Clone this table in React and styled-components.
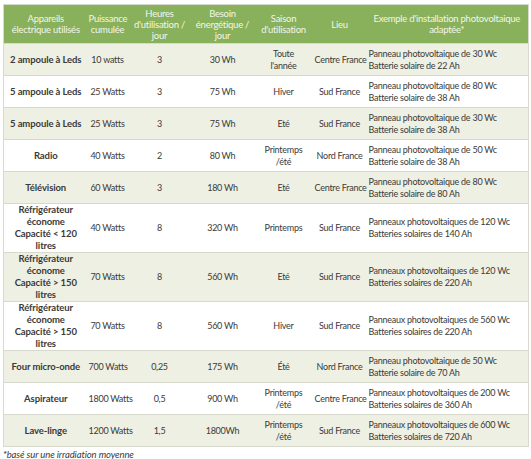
import React from 'react';
import styled, { createGlobalStyle } from 'styled-components';

const GlobalStyle = createGlobalStyle`
  html, body {
    margin: 0;
    padding: 0;
    background: #ffffff;
  }
  body {
    font-family: Lato, "Open Sans", sans-serif;
    color: #3a3a3a;
  }
`;

const Page = styled.div`
  width: 531px;
  height: 459px;
  padding: 4px 3px 0 3px;
  box-sizing: border-box;
`;

const Table = styled.table`
  width: 525px;
  border-collapse: collapse;
  table-layout: fixed;
  border: 1px solid #d6d9cb;
  font-size: 9px;
  letter-spacing: -0.25px;
`;

const HeadCell = styled.th`
  background: #89b05b;
  color: #f2f6ea;
  font-weight: normal;
  font-size: 9.5px;
  text-align: center;
  vertical-align: middle;
  line-height: 11px;
  height: 38px;
  padding: 0 1px;
  white-space: nowrap;
`;

const Row = styled.tr`
  background: ${(p) => (p.$shaded ? '#eef0e3' : '#ffffff')};
  border-top: 1px solid #d6d9cb;
  height: ${(p) => (p.$tall ? '48px' : '32px')};
`;

const Cell = styled.td`
  text-align: ${(p) => (p.$left ? 'left' : 'center')};
  vertical-align: middle;
  line-height: 12px;
  padding: 0 ${(p) => (p.$left ? '3px' : '1px')};
  white-space: nowrap;
`;

const NameCell = styled.td`
  text-align: center;
  vertical-align: middle;
  font-weight: bold;
  font-size: 9.5px;
  letter-spacing: -0.1px;
  line-height: 12px;
  padding: 0 1px;
  white-space: nowrap;
`;

const Note = styled.div`
  font-style: italic;
  font-size: 9.5px;
  line-height: 11px;
  letter-spacing: -0.1px;
  color: #3a3a3a;
  margin-top: 2px;
`;

const widths = [84, 40, 64, 62, 60, 52, 163];

const lines = (...parts) =>
  parts.map((p, i) => (
    <React.Fragment key={i}>
      {i > 0 && <br />}
      {p}
    </React.Fragment>
  ));

const headers = [
  lines('Appareils', 'électrique utilisés'),
  lines('Puissance', 'cumulée'),
  lines('Heures', "d'utilisation /", 'jour'),
  lines('Besoin', 'énergétique /', 'jour'),
  lines('Saison', "d'utilisation"),
  lines('Lieu'),
  lines("Exemple d'installation photovoltaique", 'adaptée*'),
];

const frigo = (sign, n) => lines('Réfrigérateur', 'économe', `Capacité ${sign} ${n}`, 'litres');

const printemps = lines('Printemps', '/été');

const rows = [
  ['2 ampoule à Leds', '10 watts', '3', '30 Wh', lines('Toute', "l'année"), 'Centre France', 'Panneau photovoltaique de 30 Wc', 'Batterie solaire de 22 Ah'],
  ['5 ampoule à Leds', '25 Watts', '3', '75 Wh', 'Hiver', 'Sud France', 'Panneau photovoltaique de 80 Wc', 'Batterie solaire de 38 Ah'],
  ['5 ampoule à Leds', '25 Watts', '3', '75 Wh', 'Eté', 'Sud France', 'Panneau photovoltaique de 30 Wc', 'Batterie solaire de 38 Ah'],
  ['Radio', '40 Watts', '2', '80 Wh', printemps, 'Nord France', 'Panneau photovoltaique de 50 Wc', 'Batterie solaire de 38 Ah'],
  ['Télévision', '60 Watts', '3', '180 Wh', 'Eté', 'Centre France', 'Panneau photovoltaique de 80 Wc', 'Batterie solaire de 80 Ah'],
  [frigo('<', 120), '40 Watts', '8', '320 Wh', 'Printemps', 'Sud France', 'Panneaux photovoltaiques de 120 Wc', 'Batteries solaires de 140 Ah', true],
  [frigo('>', 150), '70 Watts', '8', '560 Wh', 'Eté', 'Sud France', 'Panneaux photovoltaiques de 120 Wc', 'Batteries solaires de 220 Ah', true],
  [frigo('>', 150), '70 Watts', '8', '560 Wh', 'Hiver', 'Sud France', 'Panneaux photovoltaiques de 560 Wc', 'Batteries solaires de 220 Ah', true],
  ['Four micro-onde', '700 Watts', '0,25', '175 Wh', 'Été', 'Nord France', 'Panneau photovoltaique de 50 Wc', 'Batterie solaire de 70 Ah'],
  ['Aspirateur', '1800 Watts', '0,5', '900 Wh', printemps, 'Centre France', 'Panneaux photovoltaiques de 200 Wc', 'Batteries solaires de 360 Ah'],
  ['Lave-linge', '1200 Watts', '1,5', '1800Wh', printemps, 'Sud France', 'Panneaux photovoltaiques de 600 Wc', 'Batteries solaires de 720 Ah'],
];

const App = () => (
  <Page>
    <GlobalStyle />
    <Table>
      <colgroup>
        {widths.map((w, i) => (
          <col key={i} style={{ width: w }} />
        ))}
      </colgroup>
      <thead>
        <tr>
          {headers.map((h, i) => (
            <HeadCell key={i}>{h}</HeadCell>
          ))}
        </tr>
      </thead>
      <tbody>
        {rows.map((r, i) => (
          <Row key={i} $shaded={i % 2 === 0} $tall={r[8]}>
            <NameCell>{r[0]}</NameCell>
            <Cell>{r[1]}</Cell>
            <Cell>{r[2]}</Cell>
            <Cell>{r[3]}</Cell>
            <Cell>{r[4]}</Cell>
            <Cell>{r[5]}</Cell>
            <Cell $left>{lines(r[6], r[7])}</Cell>
          </Row>
        ))}
      </tbody>
    </Table>
    <Note>*basé sur une irradiation moyenne</Note>
  </Page>
);

export default App;
